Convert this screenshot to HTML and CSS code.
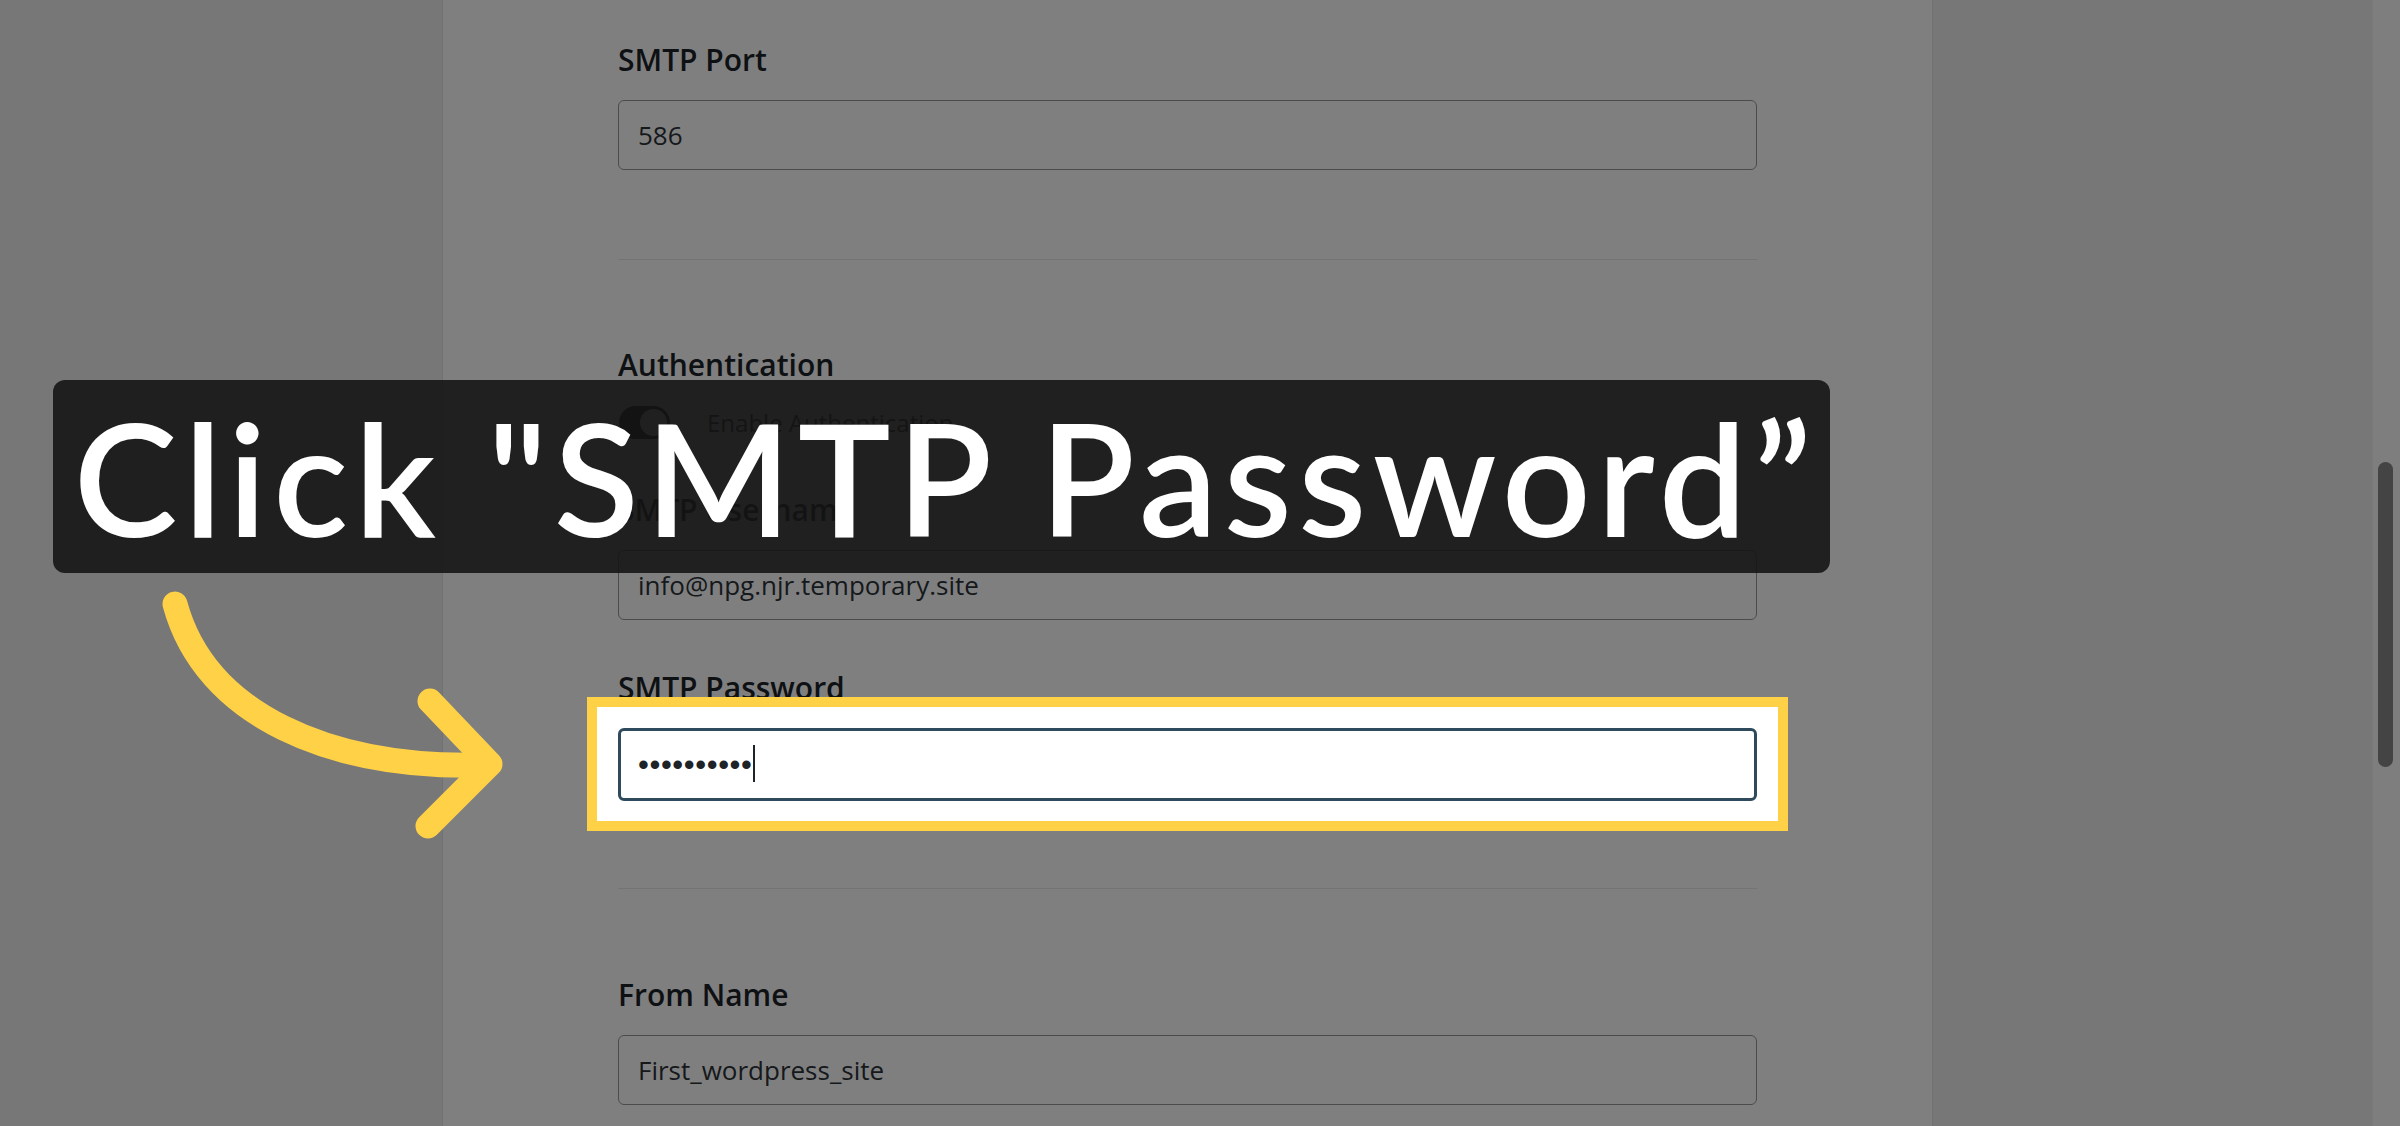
FILE: index.html
```html
<!DOCTYPE html>
<html lang="en">
<head>
<meta charset="utf-8">
<title>SMTP Settings</title>
<link rel="stylesheet" href="styles.css">
</head>
<body>
<div class="page">
  <div class="gutter"></div>
  <main class="panel">
    <section class="field field-port">
      <label class="label" for="port">SMTP Port</label>
      <input class="input" id="port" type="text" value="586">
    </section>
    <hr class="divider divider-top">
    <section class="field field-auth">
      <div class="label">Authentication</div>
      <div class="toggle-row">
        <span class="toggle"><span class="knob"></span></span>
        <span class="toggle-text">Enable Authentication</span>
      </div>
    </section>
    <section class="field field-user">
      <label class="label" for="user">SMTP Username</label>
      <input class="input" id="user" type="text" value="info@npg.njr.temporary.site">
    </section>
    <section class="field field-pass">
      <label class="label" for="pass">SMTP Password</label>
      <div class="pass-wrap">
        <input class="input input-focus" id="pass" type="password" value="secretpass">
        <span class="caret"></span>
      </div>
    </section>
    <hr class="divider divider-bottom">
    <section class="field field-from">
      <label class="label" for="from">From Name</label>
      <input class="input" id="from" type="text" value="First_wordpress_site">
    </section>
  </main>
  <div class="gutter-right"></div>
  <div class="scrollbar"><div class="thumb"></div></div>
</div>
<div class="dim"></div>
<div class="callout">Click "SMTP Password”</div>
<svg class="arrow" viewBox="140 580 400 270" width="400" height="270" xmlns="http://www.w3.org/2000/svg">
  <path d="M175 604 C 205 715, 330 770, 488 765" fill="none" stroke="#ffd147" stroke-width="25" stroke-linecap="round"/>
  <path d="M430 701 L490 764 L428 826" fill="none" stroke="#ffd147" stroke-width="25" stroke-linecap="round" stroke-linejoin="round"/>
</svg>
</body>
</html>
```

FILE: styles.css
```css
html, body {
  margin: 0;
  padding: 0;
}
body {
  width: 2400px;
  height: 1126px;
  overflow: hidden;
  background: #efefef;
  font-family: "Open Sans", "Noto Sans", sans-serif;
  position: relative;
}
.page {
  display: flex;
  height: 1126px;
}
.gutter {
  width: 442px;
  flex: none;
  background: #efefef;
}
.panel {
  width: 1491px;
  flex: none;
  box-sizing: border-box;
  background: #ffffff;
  border-left: 1px solid #e2e2e2;
  border-right: 1px solid #e2e2e2;
  padding: 40px 0 0 175px;
}
.panel > * {
  width: 1139px;
}
.gutter-right {
  flex: 1;
  background: #efefef;
}
.scrollbar {
  width: 27px;
  flex: none;
  background: #fdfdfd;
  border-left: 1px solid #f2f2f2;
}
.thumb {
  margin: 462px 0 0 5px;
  width: 15px;
  height: 305px;
  border-radius: 8px;
  background: #888888;
}
.field {
  display: flex;
  flex-direction: column;
}
.label {
  display: block;
  font-size: 30px;
  line-height: 40px;
  font-weight: 600;
  color: #1d2327;
  margin-bottom: 20px;
}
.input {
  box-sizing: border-box;
  width: 1139px;
  height: 70px;
  margin: 0;
  padding: 0 19px;
  border: 1px solid #979797;
  border-radius: 6px;
  background: #ffffff;
  font-family: "Open Sans", "Noto Sans", sans-serif;
  font-size: 26px;
  color: #2c3338;
  outline: none;
}
.divider {
  border: 0;
  height: 1px;
  background: #e8e8e8;
  margin: 0;
}
.divider-top {
  margin-top: 89px;
}
.field-auth {
  margin-top: 85px;
}
.field-auth .label {
  margin-bottom: 21px;
}
.toggle-row {
  display: flex;
  align-items: center;
  height: 33px;
  gap: 37px;
  padding-left: 1px;
}
.toggle {
  width: 51px;
  height: 33px;
  border-radius: 17px;
  background: #1d2327;
  display: flex;
  align-items: center;
  justify-content: flex-end;
  padding: 0 3px;
  box-sizing: border-box;
}
.knob {
  width: 27px;
  height: 27px;
  border-radius: 50%;
  background: #ffffff;
}
.toggle-text {
  font-size: 24px;
  line-height: 33px;
  color: #2c3338;
}
.field-user {
  margin-top: 51px;
}
.field-pass {
  margin-top: 48px;
}
.pass-wrap {
  position: relative;
  z-index: 3;
  height: 73px;
}
.pass-wrap::before {
  content: "";
  position: absolute;
  left: -31px;
  top: -31px;
  right: -31px;
  bottom: -30px;
  background: #ffffff;
  border: 10px solid #ffd147;
  z-index: -1;
}
.input-focus {
  height: 73px;
  border: 3px solid #2e4a5c;
  padding: 0 17px;
  font-family: "Liberation Sans", Arial, sans-serif;
  font-size: 31px;
  letter-spacing: 0.6px;
  color: #1d2327;
}
.caret {
  position: absolute;
  left: 135px;
  top: 17px;
  width: 2px;
  height: 37px;
  background: #1d2327;
}
.divider-bottom {
  margin-top: 87px;
}
.field-from {
  margin-top: 86px;
}
.dim {
  position: fixed;
  inset: 0;
  background: rgba(0, 0, 0, 0.5);
  z-index: 2;
}
.callout {
  position: absolute;
  left: 53px;
  top: 380px;
  width: 1777px;
  height: 193px;
  box-sizing: border-box;
  padding-left: 9px;
  border-radius: 12px;
  background: rgba(20, 20, 20, 0.89);
  color: #ffffff;
  font-family: Lato, "Noto Sans", sans-serif;
  font-weight: 600;
  font-size: 156px;
  line-height: 156px;
  letter-spacing: 6.4px;
  display: flex;
  align-items: center;
  justify-content: center;
  white-space: nowrap;
  z-index: 4;
}
.arrow {
  position: absolute;
  left: 140px;
  top: 580px;
  z-index: 4;
}
```
